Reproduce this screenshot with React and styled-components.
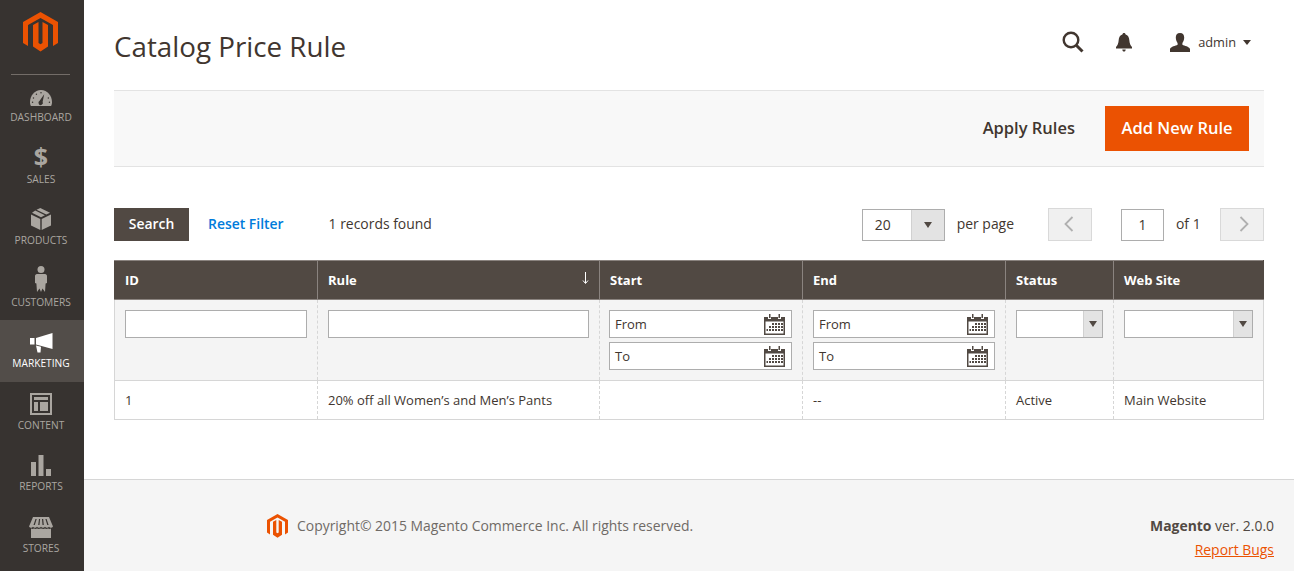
import React from "react";
import styled, { createGlobalStyle } from "styled-components";

const GlobalStyle = createGlobalStyle`
  html, body {
    margin: 0;
    height: 100%;
    overflow: hidden;
    background: #fff;
  }
  body {
    font-family: "Open Sans", "Liberation Sans", sans-serif;
    font-size: 13.93px;
    color: #41362f;
  }
  * {
    box-sizing: border-box;
  }
`;

const LogoMark = ({ size = 35 }) => (
  <svg width={size} height={(size * 40) / 35} viewBox="0 0 35 40" fill="#eb5202">
    <path d="M17.5 0L35 10V31L30 34V13L17.5 6L5 13V34L0 31V10Z" />
    <path d="M10 13L15.5 10V31L17.5 32.2L19.5 31V10L25 13V34.5L17.5 39.5L10 34.5Z" />
  </svg>
);

const GaugeIcon = () => (
  <svg width="22" height="17" viewBox="0 0 24 18" preserveAspectRatio="none">
    <path
      fill="currentColor"
      d="M12 0C5 0 0 6 0 13C0 14.500 .4 16 1 17H23C23.600 16 24 14.500 24 13C24 6 19 0 12 0Z"
    />
    <path fill="#373330" d="M15.500 4.500L13.800 12.500A2.400 2.400 0 1 1 10.500 11.500Z" />
    <g fill="#373330">
      <circle cx="12" cy="3" r=".8" />
      <circle cx="7" cy="4.500" r=".8" />
      <circle cx="3.800" cy="8.500" r=".8" />
      <circle cx="2.800" cy="13" r=".8" />
      <circle cx="20" cy="8.500" r=".8" />
      <circle cx="21.200" cy="13" r=".8" />
    </g>
  </svg>
);

const BoxIcon = () => (
  <svg width="20" height="22" viewBox="0 0 20 22" fill="currentColor">
    <path d="M0 6.500L9.300 11V22L0 17.500Z" />
    <path d="M20 6.500L10.700 11V22L20 17.500Z" />
    <path d="M5.500 1.800L9.300 0L19 4.800L15.300 6.600Z" />
    <path d="M4.200 2.500L1 4.800L10 9.300L13.900 7.300Z" />
  </svg>
);

const PersonIcon = () => (
  <svg width="12" height="26" viewBox="0 0 12 26" fill="currentColor">
    <circle cx="6" cy="3.500" r="3.500" />
    <path d="M2 8H10C11.200 8 12 9 12 10.200V17L10.600 17.500L10 26L7.500 22.500L6 26L4.500 22.500L2 26L1.400 17.500L0 17V10.200C0 9 .8 8 2 8Z" />
  </svg>
);

const MegaphoneIcon = () => (
  <svg width="23" height="20" viewBox="0 0 23 20" fill="currentColor">
    <path d="M22.500 0V16L6 11.500V5Z" />
    <path d="M0 5H4.500V11.500H0ZM6 12.500L11 13.800L10.500 19.500L7.500 19.500Z" />
  </svg>
);

const LayoutIcon = () => (
  <svg width="22" height="22" viewBox="0 0 22 22" fill="currentColor">
    <path
      fillRule="evenodd"
      d="M0 0H22V22H0ZM2 2V20H20V2ZM4 4H18V7H4ZM4 9H8V18H4ZM10 9H18V18H10Z"
    />
  </svg>
);

const BarsIcon = () => (
  <svg width="20" height="21" viewBox="0 0 20 21" fill="currentColor">
    <rect x="0" y="7" width="5" height="14" />
    <rect x="7.500" y="0" width="5" height="21" />
    <rect x="15" y="14" width="5" height="7" />
  </svg>
);

const StoreIcon = () => (
  <svg width="24" height="21" viewBox="0 0 24 21" fill="currentColor">
    <path d="M4 0H20L24 9.500C23 11 21 11 20 9.800C19 11 17 11 16 9.800C15 11 13 11 12 9.800C11 11 9 11 8 9.800C7 11 5 11 4 9.800C3 11 1 11 0 9.500Z" />
    <path d="M2 11.500C3 12 4 12 5 11.500C6 12 7 12 8 11.500C9 12 10 12 12 11.500C14 12 15 12 16 11.500C17 12 18 12 19 11.500C20 12 21 12 22 11.500V21H2Z" />
    <path
      fill="#373330"
      d="M6.500 2L4.500 8H5.800L7.700 2ZM10 2L9.200 8H10.500L11.100 2ZM13 2L13.500 8H14.800L14.200 2ZM16.400 2L18.300 8H19.600L17.600 2Z"
    />
  </svg>
);

const SearchIcon = () => (
  <svg width="22" height="22" viewBox="0 0 22 22" fill="none" stroke="#41362f">
    <circle cx="9" cy="9" r="7.300" strokeWidth="2.400" />
    <path d="M14.500 14.500L20.500 20.500" strokeWidth="3" />
  </svg>
);

const BellIcon = () => (
  <svg width="16" height="19" viewBox="0 0 16 19" fill="#41362f">
    <path d="M8 0C9 0 9.500 .6 9.600 1.500C12 2.200 13.200 4.500 13.300 7C13.500 10.500 14.500 12.500 16 14V15.500H0V14C1.500 12.500 2.500 10.500 2.700 7C2.800 4.500 4 2.200 6.400 1.500C6.500 .6 7 0 8 0Z" />
    <path d="M6.300 16.500H9.700C9.700 17.800 9 18.600 8 18.600C7 18.600 6.300 17.800 6.300 16.500Z" />
  </svg>
);

const UserIcon = () => (
  <svg width="20" height="19" viewBox="0 0 20 19" fill="#41362f">
    <path d="M10 0C13 0 14.200 2 14.200 4.500C14.200 7 13.200 9 12.400 10V11.800C14.500 13 19 13.500 20 16V19H0V16C1 13.500 5.500 13 7.600 11.800V10C6.800 9 5.800 7 5.800 4.500C5.800 2 7 0 10 0Z" />
  </svg>
);

const CalendarIcon = () => (
  <svg width="21" height="21" viewBox="0 0 21 21">
    <path fill="#514943" d="M0 3H4V5H7V3H14V5H17V3H21V21H0Z" />
    <rect x="1.500" y="7.500" width="18" height="12" fill="#fff" />
    <path
      fill="#514943"
      d="M5 0H6.500V4H5ZM14.500 0H16V4H14.500ZM8 9H10V11H8ZM11 9H13V11H11ZM14 9H16V11H14ZM17 9H19V11H17ZM5 12H7V14H5ZM8 12H10V14H8ZM11 12H13V14H11ZM14 12H16V14H14ZM17 12H19V14H17ZM2.500 15H4V17H2.500ZM5 15H7V17H5ZM8 15H10V17H8ZM11 15H13V17H11ZM14 15H16V17H14ZM17 15H19V17H17Z"
    />
  </svg>
);

const Chevron = ({ flip }) => (
  <svg width="10" height="16" viewBox="0 0 10 16" fill="none" stroke="#b0b0b0" strokeWidth="1.800">
    <path d={flip ? "M1.500 1L8.500 8L1.500 15" : "M8.500 1L1.500 8L8.500 15"} />
  </svg>
);

const SortIcon = () => (
  <svg width="7" height="12" viewBox="0 0 7 12" fill="none" stroke="#fff" strokeWidth="1">
    <path d="M3.500 0V11M1 8.500L3.500 11.500L6 8.500" />
  </svg>
);

const navItems = [
  { label: "Dashboard", icon: <GaugeIcon /> },
  { label: "Sales", icon: <DollarGlyph>$</DollarGlyph> },
  { label: "Products", icon: <BoxIcon /> },
  { label: "Customers", icon: <PersonIcon /> },
  { label: "Marketing", icon: <MegaphoneIcon />, active: true },
  { label: "Content", icon: <LayoutIcon /> },
  { label: "Reports", icon: <BarsIcon /> },
  { label: "Stores", icon: <StoreIcon /> },
];

const DateFilter = () => (
  <DateStack>
    <DateField>
      <span>From</span>
      <CalendarIcon />
    </DateField>
    <DateField>
      <span>To</span>
      <CalendarIcon />
    </DateField>
  </DateStack>
);

const App = () => {
  return (
    <Layout>
      <GlobalStyle />
      <Sidebar>
        <LogoBox>
          <LogoMark />
        </LogoBox>
        <Divider />
        {navItems.map((item) => (
          <NavItem key={item.label} $active={item.active}>
            <NavIcon>{item.icon}</NavIcon>
            <NavLabel>{item.label}</NavLabel>
          </NavItem>
        ))}
      </Sidebar>
      <Main>
        <Content>
          <PageHeader>
            <Title>Catalog Price Rule</Title>
            <HeaderTools>
              <SearchIcon />
              <BellIcon />
              <UserMenu>
                <UserIcon />
                <span>admin</span>
                <SmallCaret />
              </UserMenu>
            </HeaderTools>
          </PageHeader>
          <ActionBar>
            <GhostButton>Apply Rules</GhostButton>
            <PrimaryButton>Add New Rule</PrimaryButton>
          </ActionBar>
          <GridControls>
            <SearchButton>Search</SearchButton>
            <ResetLink>Reset Filter</ResetLink>
            <Records>1 records found</Records>
            <Pager>
              <PerPageSelect>
                <span>20</span>
                <SelectArrow $wide>
                  <Caret />
                </SelectArrow>
              </PerPageSelect>
              <PerPageLabel>per page</PerPageLabel>
              <PagerButton $side="prev">
                <Chevron />
              </PagerButton>
              <PageInput>1</PageInput>
              <PageCount>of 1</PageCount>
              <PagerButton $side="next">
                <Chevron flip />
              </PagerButton>
            </Pager>
          </GridControls>
          <Grid>
            <colgroup>
              <col style={{ width: 203 }} />
              <col style={{ width: 282 }} />
              <col style={{ width: 203 }} />
              <col style={{ width: 203 }} />
              <col style={{ width: 108 }} />
              <col style={{ width: 150 }} />
            </colgroup>
            <thead>
              <tr>
                <HeadCell>ID</HeadCell>
                <HeadCell>
                  Rule
                  <SortArrow>
                    <SortIcon />
                  </SortArrow>
                </HeadCell>
                <HeadCell>Start</HeadCell>
                <HeadCell>End</HeadCell>
                <HeadCell>Status</HeadCell>
                <HeadCell>Web Site</HeadCell>
              </tr>
            </thead>
            <tbody>
              <tr>
                <FilterCell>
                  <TextFilter />
                </FilterCell>
                <FilterCell>
                  <TextFilter />
                </FilterCell>
                <FilterCell $tight>
                  <DateFilter />
                </FilterCell>
                <FilterCell>
                  <DateFilter />
                </FilterCell>
                <FilterCell>
                  <SelectFilter>
                    <SelectArrow>
                      <Caret />
                    </SelectArrow>
                  </SelectFilter>
                </FilterCell>
                <FilterCell>
                  <SelectFilter>
                    <SelectArrow>
                      <Caret />
                    </SelectArrow>
                  </SelectFilter>
                </FilterCell>
              </tr>
              <tr>
                <DataCell>1</DataCell>
                <DataCell>20% off all Women’s and Men’s Pants</DataCell>
                <DataCell />
                <DataCell>--</DataCell>
                <DataCell>Active</DataCell>
                <DataCell>Main Website</DataCell>
              </tr>
            </tbody>
          </Grid>
        </Content>
        <Footer>
          <Copyright>
            <LogoMark size={21} />
            <span>Copyright© 2015 Magento Commerce Inc. All rights reserved.</span>
          </Copyright>
          <FooterRight>
            <Version>
              <strong>Magento</strong> ver. 2.0.0
            </Version>
            <BugLink>Report Bugs</BugLink>
          </FooterRight>
        </Footer>
      </Main>
    </Layout>
  );
};

export default App;

function DollarGlyph({ children }) {
  return <DollarText>{children}</DollarText>;
}

const DollarText = styled.span`
  font-family: "Open Sans", sans-serif;
  font-size: 25px;
  font-weight: 700;
  line-height: 26px;
`;

const Layout = styled.div`
  display: flex;
  width: 1294px;
  height: 571px;
  overflow: hidden;
`;

const Sidebar = styled.nav`
  flex: 0 0 84px;
  display: flex;
  flex-direction: column;
  background: #373330;
`;

const LogoBox = styled.div`
  height: 74px;
  padding: 12px 0 0 23px;
`;

const Divider = styled.div`
  height: 1px;
  margin: 0 14px -1px 11px;
  background: #736d68;
`;

const NavItem = styled.div`
  flex: 0 0 61.5px;
  display: flex;
  flex-direction: column;
  align-items: center;
  padding: 0 2px 11.5px 0;
  justify-content: flex-end;
  color: ${(p) => (p.$active ? "#fff" : "#aaa6a0")};
  background: ${(p) => (p.$active ? "#524d49" : "transparent")};
`;

const NavIcon = styled.div`
  height: 27px;
  display: flex;
  align-items: flex-end;
  justify-content: center;
  padding-bottom: 3px;
`;

const NavLabel = styled.div`
  font-size: 10.2px;
  line-height: 14px;
  text-transform: uppercase;
`;

const Main = styled.main`
  flex: 1;
  display: flex;
  flex-direction: column;
  min-width: 0;
`;

const Content = styled.div`
  flex: 1;
  padding: 0 30px;
`;

const PageHeader = styled.header`
  height: 90px;
  display: flex;
  align-items: flex-start;
  justify-content: space-between;
`;

const Title = styled.h1`
  margin: 26px 0 0;
  font-size: 27.75px;
  line-height: 40px;
  font-weight: 400;
  color: #41362f;
`;

const HeaderTools = styled.div`
  display: flex;
  align-items: center;
  gap: 32px;
  padding: 31px 13px 0 0;
  margin-left: -1px;
`;

const UserMenu = styled.div`
  display: flex;
  align-items: center;
  margin-left: 6px;
  font-size: 12.8px;
  color: #41362f;

  span {
    margin: 0 7px 0 8px;
    padding-bottom: 1px;
  }
`;

const SmallCaret = styled.i`
  width: 0;
  height: 0;
  border-style: solid;
  border-width: 5px 4.5px 0;
  border-color: #41362f transparent transparent;
`;

const ActionBar = styled.div`
  height: 77px;
  display: flex;
  align-items: center;
  justify-content: flex-end;
  gap: 30px;
  padding-right: 15px;
  background: #f8f8f8;
  border-top: 1px solid #e3e3e3;
  border-bottom: 1px solid #e3e3e3;
`;

const GhostButton = styled.div`
  font-size: 16.5px;
  font-weight: 600;
  color: #41362f;
  padding-bottom: 2px;
`;

const PrimaryButton = styled.div`
  width: 144px;
  height: 45px;
  display: flex;
  align-items: center;
  justify-content: center;
  padding-bottom: 2px;
  font-size: 16.5px;
  font-weight: 600;
  color: #fff;
  background: #eb5202;
`;

const GridControls = styled.div`
  display: flex;
  align-items: center;
  height: 33px;
  margin: 41px 0 19px;
`;

const SearchButton = styled.div`
  width: 75px;
  height: 33px;
  display: flex;
  align-items: center;
  justify-content: center;
  padding-bottom: 2px;
  font-weight: 600;
  color: #fff;
  background: #514943;
`;

const ResetLink = styled.div`
  margin-left: 19px;
  padding-bottom: 2px;
  font-weight: 600;
  color: #007bdb;
`;

const Records = styled.div`
  margin-left: 45px;
  padding-bottom: 2px;
  color: #41362f;
`;

const Pager = styled.div`
  margin-left: auto;
  display: flex;
  align-items: center;
`;

const PerPageSelect = styled.div`
  position: relative;
  width: 83px;
  height: 32px;
  display: flex;
  align-items: center;
  padding: 0 0 1px 12px;
  border: 1px solid #adadad;
  background: #fff;
`;

const SelectArrow = styled.div`
  position: absolute;
  top: 0;
  right: 0;
  bottom: 0;
  width: ${(p) => (p.$wide ? "33px" : "19px")};
  display: flex;
  align-items: center;
  justify-content: center;
  background: #e3e3e3;
  border-left: 1px solid #d1d1d1;
`;

const Caret = styled.i`
  width: 0;
  height: 0;
  border-style: solid;
  border-width: 6px 4.500px 0;
  border-color: #514943 transparent transparent;
`;

const PerPageLabel = styled.div`
  margin: 0 34px 0 12px;
  padding-bottom: 2px;
`;

const PagerButton = styled.div`
  width: 44px;
  height: 33px;
  display: flex;
  align-items: center;
  justify-content: center;
  padding: ${(p) => (p.$side === "prev" ? "0 2px 2px 0" : "0 0 2px 4px")};
  background: #f0f0f0;
  border: 1px solid #d9d9d9;
`;

const PageInput = styled.div`
  width: 43px;
  height: 32px;
  margin-left: 29px;
  display: flex;
  align-items: center;
  justify-content: center;
  padding-bottom: 1px;
  border: 1px solid #adadad;
`;

const PageCount = styled.div`
  width: 56px;
  padding: 0 0 2px 12px;
`;

const Grid = styled.table`
  width: 1149px;
  table-layout: fixed;
  border-collapse: collapse;
  font-size: 13px;
`;

const HeadCell = styled.th`
  position: relative;
  height: 39px;
  padding: 0 10px;
  text-align: left;
  font-size: 13px;
  font-weight: 700;
  color: #fff;
  background: #514943;
  border: 1px solid #8a837f;
  &:first-child {
    border-left-color: #514943;
  }
  &:last-child {
    border-right-color: #514943;
  }
`;

const SortArrow = styled.span`
  position: absolute;
  top: 11px;
  right: 10px;
  line-height: 0;
`;

const FilterCell = styled.td`
  height: 81px;
  padding: ${(p) => (p.$tight ? "10px 10px 10px 9px" : "10px")};
  vertical-align: top;
  background: #f4f4f4;
  border: 1px dashed #d6d6d6;
  border-bottom: 1px solid #d6d6d6;
  &:first-child {
    border-left-style: solid;
  }
  &:last-child {
    border-right-style: solid;
  }
`;

const DataCell = styled.td`
  height: 39px;
  padding: 0 10px;
  color: #41362f;
  border: 1px dashed #d6d6d6;
  border-bottom: 1px solid #d6d6d6;
  &:first-child {
    border-left-style: solid;
  }
  &:last-child {
    border-right-style: solid;
  }
`;

const TextFilter = styled.div`
  height: 28px;
  background: #fff;
  border: 1px solid #adadad;
`;

const DateStack = styled.div`
  display: flex;
  flex-direction: column;
  gap: 4px;
`;

const DateField = styled.div`
  height: 28px;
  display: flex;
  align-items: center;
  justify-content: space-between;
  padding: 0 6px 0 5px;
  background: #fff;
  border: 1px solid #adadad;
  color: #41362f;
`;

const SelectFilter = styled.div`
  position: relative;
  height: 28px;
  background: #fff;
  border: 1px solid #adadad;
`;

const Footer = styled.footer`
  flex: 0 0 92px;
  display: flex;
  justify-content: space-between;
  padding: 34px 20px 0 183px;
  background: #f5f5f5;
  border-top: 1px solid #d6d6d6;
`;

const Copyright = styled.div`
  display: flex;
  align-items: flex-start;
  gap: 9px;
  color: #6f6a66;
  line-height: 24px;
`;

const FooterRight = styled.div`
  display: flex;
  flex-direction: column;
  align-items: flex-end;
  gap: 5px;
  color: #514943;
  line-height: 19px;
  padding-top: 2px;
`;

const Version = styled.div`
  strong {
    font-weight: 700;
  }
`;

const BugLink = styled.div`
  color: #eb5202;
  text-decoration: underline;
`;
